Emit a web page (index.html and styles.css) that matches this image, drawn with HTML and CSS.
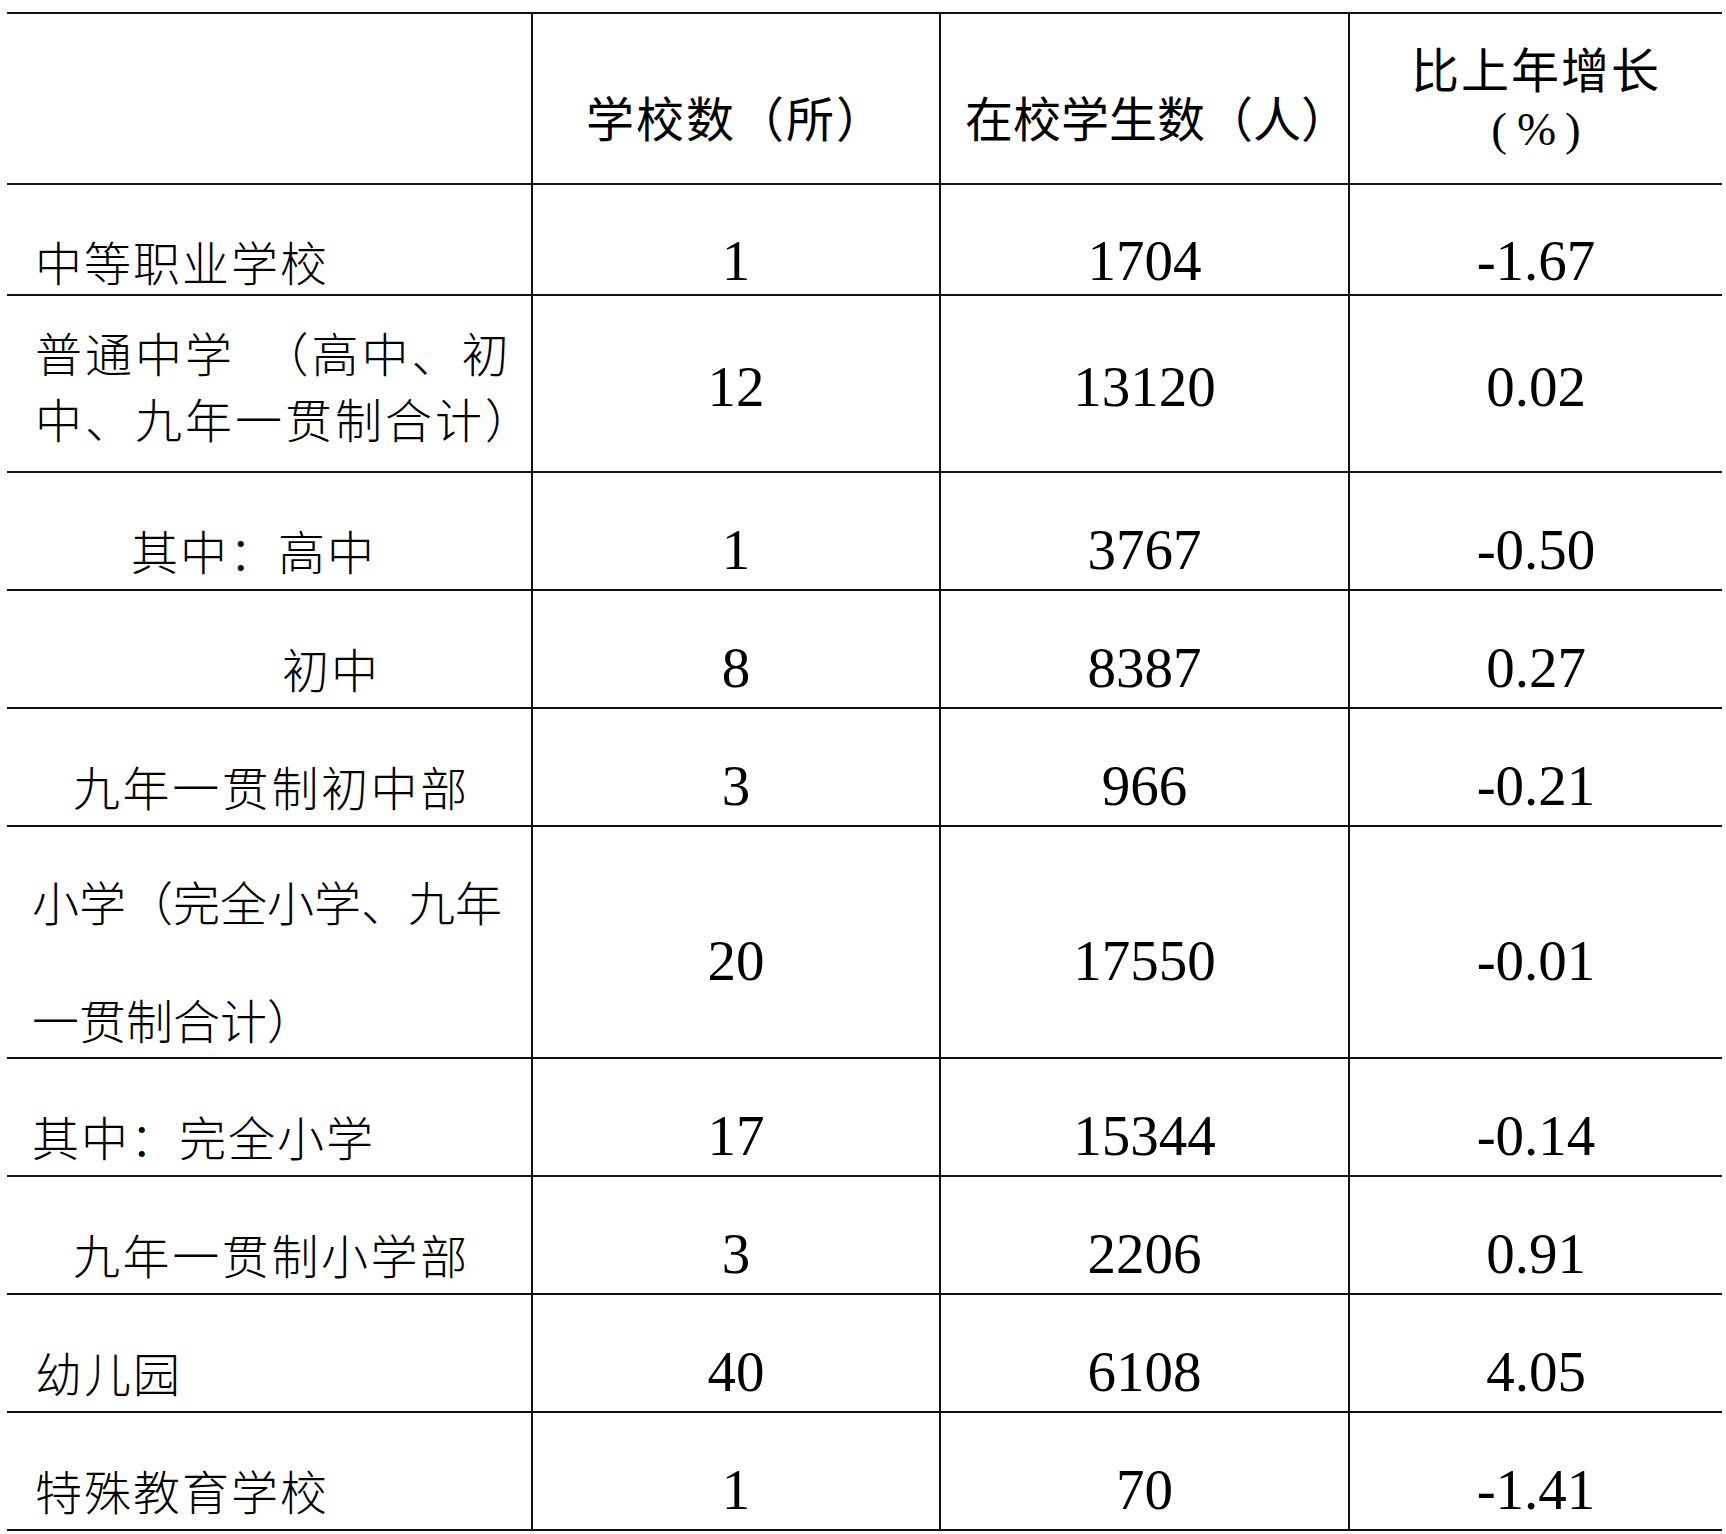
FILE: index.html
```html
<!DOCTYPE html>
<html lang="zh-CN">
<head>
<meta charset="utf-8">
<title>学校统计</title>
<link rel="stylesheet" href="styles.css">
</head>
<body>
<table class="stats">
  <colgroup>
    <col class="c1"><col class="c2"><col class="c3"><col class="c4">
  </colgroup>
  <thead>
    <tr class="head">
      <th class="label"></th>
      <th class="h sp">学校数（所）</th>
      <th class="h shift">在校学生数（人）</th>
      <th class="h h2"><span class="ln sp">比上年增长</span><span class="ln pct">(<span class="pc">%</span>)</span></th>
    </tr>
  </thead>
  <tbody>
    <tr class="r-first">
      <td class="label">中等职业学校</td><td>1</td><td>1704</td><td>-1.67</td>
    </tr>
    <tr class="r-two">
      <td class="label"><span class="ln">普通中学&ensp;（高中、初</span><span class="ln">中、九年一贯制合计）</span></td><td>12</td><td>13120</td><td>0.02</td>
    </tr>
    <tr class="r">
      <td class="label in-a">其中：高中</td><td>1</td><td>3767</td><td>-0.50</td>
    </tr>
    <tr class="r">
      <td class="label in-b">初中</td><td>8</td><td>8387</td><td>0.27</td>
    </tr>
    <tr class="r">
      <td class="label in-c">九年一贯制初中部</td><td>3</td><td>966</td><td>-0.21</td>
    </tr>
    <tr class="r-tall">
      <td class="label"><span class="ln">小学（完全小学、九年</span><span class="ln">一贯制合计）</span></td><td>20</td><td>17550</td><td>-0.01</td>
    </tr>
    <tr class="r">
      <td class="label in-0">其中：完全小学</td><td>17</td><td>15344</td><td>-0.14</td>
    </tr>
    <tr class="r">
      <td class="label in-c">九年一贯制小学部</td><td>3</td><td>2206</td><td>0.91</td>
    </tr>
    <tr class="r">
      <td class="label">幼儿园</td><td>40</td><td>6108</td><td>4.05</td>
    </tr>
    <tr class="r">
      <td class="label">特殊教育学校</td><td>1</td><td>70</td><td>-1.41</td>
    </tr>
  </tbody>
</table>
</body>
</html>
```

FILE: styles.css
```css
html, body {
  margin: 0;
  padding: 0;
  background: #ffffff;
}

body {
  color: #000;
  font-family: "Liberation Serif", "Noto Sans CJK SC", serif;
}

.stats {
  border-collapse: collapse;
  table-layout: fixed;
  width: 1715px;
  margin: 12px 0 0 7px;
}

.c1 { width: 525px; }
.c2 { width: 408px; }
.c3 { width: 409px; }
.c4 { width: 373px; }

.stats th,
.stats td {
  border: 2px solid #111;
  padding: 0 0 9px 0;
  vertical-align: bottom;
  text-align: center;
  font-size: 57px;
  line-height: 60px;
  font-weight: normal;
  white-space: nowrap;
}

.stats th:first-child,
.stats td:first-child {
  border-left: none;
}

.stats th:last-child,
.stats td:last-child {
  border-right: none;
}

.ln {
  display: block;
}

/* header */
.head { height: 171px; }

.stats th.h {
  font-family: "Noto Sans CJK SC", sans-serif;
  font-weight: 400;
  font-size: 48px;
  line-height: 60px;
  padding-bottom: 37px;
}

.stats th.sp,
.stats .sp {
  letter-spacing: 2px;
}

.stats th.shift {
  padding-left: 24px;
}

.stats th.h2 {
  padding-bottom: 24px;
}

.pct {
  margin-top: 2px;
  font-family: "Liberation Serif", serif;
  font-weight: normal;
  font-size: 47px;
}

.pc {
  margin: 0 9px 0 10px;
}

/* label column */
.stats .label {
  text-align: left;
  font-family: "Noto Sans CJK SC", sans-serif;
  font-weight: 300;
  font-size: 47px;
  line-height: 60px;
  letter-spacing: 2px;
  padding-left: 28px;
}

.stats .in-0 { padding-left: 25px; }
.stats .in-a { padding-left: 124px; }
.stats .in-b { padding-left: 275px; }
.stats .in-c { padding-left: 66px; letter-spacing: 2.6px; }

/* rows */
.r { height: 118px; }

.r-first { height: 111px; }
.r-first td { padding-bottom: 3px; }

.r-two { height: 177px; }
.r-two td { padding-bottom: 54px; }
.stats .r-two td.label {
  line-height: 66px;
  padding-bottom: 20px;
  letter-spacing: 3px;
}

.r-tall { height: 232px; }
.r-tall td { padding-bottom: 66px; }
.stats .r-tall td.label {
  letter-spacing: 0;
  padding-bottom: 8px;
  padding-left: 25px;
}
.r-tall td.label .ln + .ln {
  margin-top: 58px;
}
```
